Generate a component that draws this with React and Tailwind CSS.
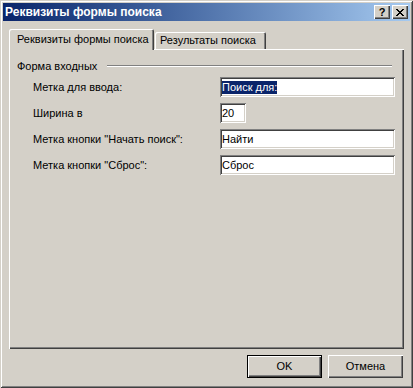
import React from "react";

const font = { fontFamily: '"Liberation Sans", Arial, sans-serif' };

function Input({ w, children }) {
  return (
    <div
      className={`${w} h-[20px] bg-white flex items-center pl-[2px] shadow-[inset_1px_1px_#808080,inset_-1px_-1px_#ffffff,inset_2px_2px_#404040,inset_-2px_-2px_#d4d0c8] text-[11px] text-black`}
    >
      {children}
    </div>
  );
}

function Row({ label, children }) {
  return (
    <div className="flex items-center h-[20px]">
      <div className="w-[203px] pl-[16px] text-[11px] text-black">{label}</div>
      {children}
    </div>
  );
}

function Btn({ children, def }) {
  return (
    <div
      className={`w-[75px] h-[23px] flex items-center justify-center text-[11px] text-black ${
        def
          ? "border border-black shadow-[inset_1px_1px_#ffffff,inset_-1px_-1px_#404040,inset_-2px_-2px_#808080]"
          : "shadow-[inset_1px_1px_#ffffff,inset_-1px_-1px_#404040,inset_-2px_-2px_#808080]"
      }`}
    >
      {children}
    </div>
  );
}

export default function App() {
  return (
    <div
      style={font}
      className="w-[413px] h-[388px] bg-[#d4d0c8] p-[3px] flex flex-col shadow-[inset_1px_1px_#d4d0c8,inset_-1px_-1px_#404040,inset_2px_2px_#ffffff,inset_-2px_-2px_#808080]"
    >
      <div className="h-[18px] flex items-center bg-linear-to-r from-[#0a246a] to-[#a6caf0]">
        <span className="pl-[2px] text-white font-bold text-[12px] leading-none">
          Реквизиты формы поиска
        </span>
        <div className="ml-auto flex gap-[2px] mr-[2px]">
          <div className="w-[16px] h-[14px] bg-[#d4d0c8] flex items-center justify-center text-[11px] font-bold text-black leading-none shadow-[inset_1px_1px_#ffffff,inset_-1px_-1px_#404040,inset_-2px_-2px_#808080]">
            ?
          </div>
          <div className="w-[16px] h-[14px] bg-[#d4d0c8] flex items-center justify-center shadow-[inset_1px_1px_#ffffff,inset_-1px_-1px_#404040,inset_-2px_-2px_#808080]">
            <svg width="8" height="7" viewBox="0 0 8 7">
              <path d="M0 0h2v1h-2zM6 0h2v1h-2zM1 1h2v1h-2zM5 1h2v1h-2zM2 2h4v1h-4zM3 3h2v1h-2zM2 4h4v1h-4zM1 5h2v1h-2zM5 5h2v1h-2zM0 6h2v1h-2zM6 6h2v1h-2z" fill="#000" />
            </svg>
          </div>
        </div>
      </div>

      <div className="flex-1 flex flex-col px-[6px] pt-[8px]">
        <div className="flex items-end h-[20px] relative z-10">
          <div className="h-[21px] w-[145px] -mb-[1px] bg-[#d4d0c8] flex items-center pl-[8px] pb-[1px] text-[11px] text-black rounded-t-[2px] shadow-[inset_1px_1px_#ffffff,inset_-1px_0_#404040,inset_-2px_0_#808080]">
            Реквизиты формы поиска
          </div>
          <div className="h-[17px] w-[111px] ml-[1px] flex items-center pl-[5px] text-[11px] text-black rounded-t-[2px] shadow-[inset_1px_1px_#ffffff,inset_-1px_0_#404040,inset_-2px_0_#808080]">
            Результаты поиска
          </div>
        </div>
        <div className="h-[300px] flex flex-col pt-[10px] px-[8px] shadow-[inset_1px_1px_#ffffff,inset_-1px_-1px_#404040,inset_-2px_-2px_#808080]">
          <div className="flex items-center h-[14px]">
            <span className="text-[11px] text-black pr-[10px]">Форма входных</span>
            <div className="flex-1 h-[2px] border-t border-[#808080] border-b-white border-b mr-[4px]" />
          </div>
          <div className="flex flex-col gap-[6px] mt-[4px]">
            <Row label="Метка для ввода:">
              <Input w="w-[175px]">
                <span className="bg-[#0a246a] text-white leading-[13px]">Поиск для:</span>
              </Input>
            </Row>
            <Row label="Ширина в">
              <Input w="w-[26px]">20</Input>
            </Row>
            <Row label={'Метка кнопки "Начать поиск":'}>
              <Input w="w-[175px]">Найти</Input>
            </Row>
            <Row label={'Метка кнопки "Сброс":'}>
              <Input w="w-[175px]">Сброс</Input>
            </Row>
          </div>
        </div>
        <div className="flex justify-end gap-[6px] pt-[6px] pr-[1px]">
          <Btn def>OK</Btn>
          <Btn>Отмена</Btn>
        </div>
      </div>
    </div>
  );
}
